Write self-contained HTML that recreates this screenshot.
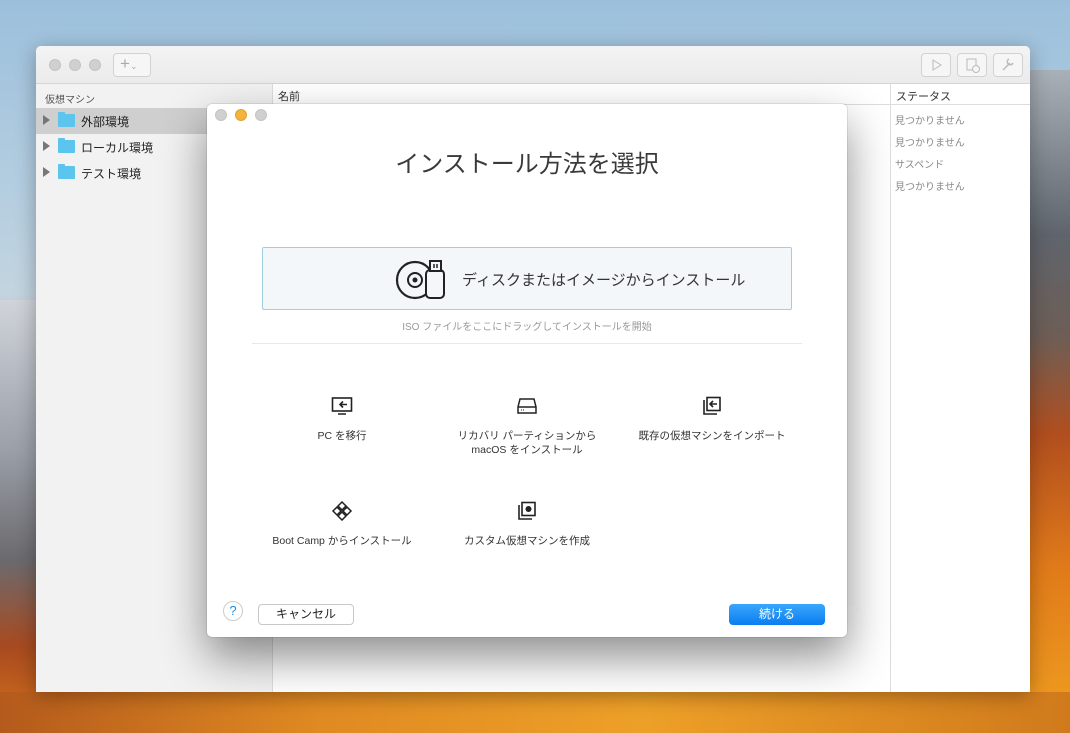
<!DOCTYPE html>
<html><head><meta charset="utf-8"><style>
*{margin:0;padding:0;box-sizing:border-box}
body{width:1070px;height:733px;overflow:hidden;position:relative;font-family:"Liberation Sans","Noto Sans CJK JP",sans-serif;
background:linear-gradient(180deg,#9cc0dc 0%,#b3cde0 25%,#c3d4df 40%,#8d8f95 60%,#b9542a 80%,#e0891c 92%,#c86a18 100%);}
.lm{position:absolute;left:0;top:300px;width:36px;height:433px;background:linear-gradient(180deg,#d0d4da 0%,#9a9fa8 35%,#6b6a6e 60%,#a84a20 80%,#d8741a 100%)}
.rm{position:absolute;right:0;top:70px;width:40px;height:663px;background:linear-gradient(180deg,#a8b0b8 0%,#5f646c 25%,#6d5e56 40%,#b14e1e 55%,#e07a1a 75%,#f0a020 100%)}
.bot{position:absolute;left:0;top:692px;width:1070px;height:41px;background:linear-gradient(90deg,#b45a1c,#e08a22 30%,#eda028 60%,#d07a1c)}
.win{position:absolute;left:36px;top:46px;width:994px;height:646px;background:#fff;border-radius:5px 5px 0 0;overflow:hidden;box-shadow:0 4px 20px rgba(0,0,0,.3)}
.tb{height:38px;background:linear-gradient(#f3f3f3,#ebebeb);border-bottom:1px solid #d5d5d5;position:relative}
.dot{position:absolute;width:12px;height:12px;border-radius:50%;background:#d0d0d0;border:1px solid #c4c4c4}
.btn{position:absolute;border:1px solid #d2d2d2;border-radius:4px;background:#f6f6f6;color:#aaa}
.side{position:absolute;left:0;top:38px;width:237px;bottom:0;background:#f2f2f2;border-right:1px solid #ddd}
.side .h{font-size:10px;color:#555;padding:7px 0 0 9px;height:24px}
.row{height:26px;position:relative;font-size:12px;color:#222}
.row .tri{position:absolute;left:7px;top:7px;width:0;height:0;border-left:7px solid #777;border-top:5px solid transparent;border-bottom:5px solid transparent}
.row .f{position:absolute;left:22px;top:6px;width:17px;height:13px;background:#5cc5ee;border-radius:1px}
.row .f:before{content:"";position:absolute;left:0;top:-2px;width:7px;height:3px;background:#5cc5ee;border-radius:1px 1px 0 0}
.row span{position:absolute;left:45px;top:5px}
.col{position:absolute;top:38px;height:21px;border-bottom:1px solid #ddd;font-size:11px;color:#333;padding:4px 5px}
.st{position:absolute;left:859px;font-size:10px;color:#888}
.dlg{position:absolute;left:207px;top:104px;width:640px;height:533px;background:#fff;border-radius:5px;box-shadow:0 20px 45px rgba(0,0,0,.45),0 0 0 1px rgba(0,0,0,.08)}
.ttl{position:absolute;top:40px;width:100%;text-align:center;font-size:24px;color:#3a3a3a}
.big{position:absolute;left:55px;top:143px;width:530px;height:63px;background:#f3f7fa;border:1px solid #9fd0e0;border-radius:2px}
.big span{position:absolute;left:199px;top:21px;font-size:15px;color:#333}
.hint{position:absolute;top:214px;width:100%;text-align:center;font-size:10px;color:#999}
.sep{position:absolute;left:45px;top:239px;width:550px;border-top:1px solid #e8e8e8}
.opt{position:absolute;width:200px;text-align:center;font-size:10.5px;color:#333;line-height:14px}
.opt svg{display:block;margin:0 auto 13px}
</style></head><body>
<div class="lm"></div><div class="rm"></div><div class="bot"></div>
<div class="win">
 <div class="tb">
  <div class="dot" style="left:13px;top:13px"></div><div class="dot" style="left:33px;top:13px"></div><div class="dot" style="left:53px;top:13px"></div>
  <div class="btn" style="left:77px;top:7px;width:38px;height:24px;font-size:17px;line-height:20px;padding-left:6px">+<span style="font-size:9px">⌄</span></div>
  <div class="btn" style="left:885px;top:7px;width:30px;height:24px"><svg width="28" height="22"><path d="M11 6l8 5-8 5z" fill="none" stroke="#bbb"/></svg></div>
  <div class="btn" style="left:921px;top:7px;width:30px;height:24px"><svg width="28" height="22"><rect x="9" y="5" width="9" height="11" fill="none" stroke="#bbb"/><circle cx="18" cy="15" r="3.5" fill="#f6f6f6" stroke="#bbb"/></svg></div>
  <div class="btn" style="left:957px;top:7px;width:30px;height:24px"><svg width="28" height="22"><path d="M9 16l7-7M15 5a3 3 0 1 0 4 4" fill="none" stroke="#bbb" stroke-width="1.5"/></svg></div>
 </div>
 <div class="side">
  <div class="h">仮想マシン</div>
  <div class="row" style="background:#cfcfcf"><i class="tri"></i><i class="f"></i><span>外部環境</span></div>
  <div class="row"><i class="tri"></i><i class="f"></i><span>ローカル環境</span></div>
  <div class="row"><i class="tri"></i><i class="f"></i><span>テスト環境</span></div>
 </div>
 <div class="col" style="left:237px;width:617px">名前</div>
 <div class="col" style="left:854px;width:140px;border-left:1px solid #ddd">ステータス</div>
 <div style="position:absolute;left:854px;top:59px;bottom:0;border-left:1px solid #ddd"></div>
 <div class="st" style="top:66px">見つかりません</div>
 <div class="st" style="top:88px">見つかりません</div>
 <div class="st" style="top:110px">サスペンド</div>
 <div class="st" style="top:132px">見つかりません</div>
</div>
<div class="dlg">
 <div class="dot" style="left:8px;top:5px"></div><div class="dot" style="left:28px;top:5px;background:#f5b33b;border-color:#e0a030"></div><div class="dot" style="left:48px;top:5px"></div>
 <div class="ttl">インストール方法を選択</div>
 <div class="big">
  <svg style="position:absolute;left:132px;top:10px" width="54" height="44" viewBox="0 0 54 44"><circle cx="20" cy="22" r="18" fill="none" stroke="#222" stroke-width="2.2"/><circle cx="20" cy="22" r="7" fill="none" stroke="#222" stroke-width="2"/><circle cx="20" cy="22" r="2.5" fill="#222"/><rect x="31" y="12" width="18" height="28" rx="4" fill="#f3f7fa" stroke="#222" stroke-width="2"/><rect x="35" y="3" width="11" height="10" fill="#f3f7fa" stroke="#222" stroke-width="2"/><path d="M39 6v4M42 6v4" stroke="#222" stroke-width="1.5"/></svg>
  <span>ディスクまたはイメージからインストール</span>
 </div>
 <div class="hint">ISO ファイルをここにドラッグしてインストールを開始</div>
 <div class="sep"></div>
 <div class="opt" style="left:35px;top:292px"><svg width="22" height="20"><rect x="1.5" y="2" width="19" height="13" fill="none" stroke="#222" stroke-width="1.6"/><path d="M7 18h8M16 8.5h-7M12 5.5l-3 3 3 3" fill="none" stroke="#222" stroke-width="1.6"/></svg>PC を移行</div>
 <div class="opt" style="left:220px;top:292px"><svg width="22" height="20"><path d="M4 3h14l2 8v6H2v-6z M2 11h18" fill="none" stroke="#222" stroke-width="1.5"/><path d="M5 14h1M7 14h1" stroke="#222"/></svg>リカバリ パーティションから<br>macOS をインストール</div>
 <div class="opt" style="left:405px;top:292px"><svg width="22" height="20"><path d="M3 4v14h13" fill="none" stroke="#222" stroke-width="1.6"/><rect x="6" y="1.5" width="13" height="13" fill="none" stroke="#222" stroke-width="1.6"/><path d="M16 8h-7M12 5l-3 3 3 3" fill="none" stroke="#222" stroke-width="1.6"/></svg>既存の仮想マシンをインポート</div>
 <div class="opt" style="left:35px;top:397px"><svg width="22" height="20"><g fill="none" stroke="#222" stroke-width="1.5"><path d="M11 1l4 4-4 4-4-4z"/><path d="M11 11l4 4-4 4-4-4z"/><path d="M6 6l4 4-4 4-4-4z"/><path d="M16 6l4 4-4 4-4-4z"/></g></svg>Boot Camp からインストール</div>
 <div class="opt" style="left:220px;top:397px"><svg width="22" height="20"><path d="M3 4v14h13" fill="none" stroke="#222" stroke-width="1.6"/><rect x="6" y="1.5" width="13" height="13" fill="none" stroke="#222" stroke-width="1.6"/><circle cx="12.5" cy="8" r="3" fill="#222"/></svg>カスタム仮想マシンを作成</div>
 <div style="position:absolute;left:16px;top:497px;width:20px;height:20px;border-radius:50%;border:1px solid #ccc;color:#1a8ee8;font-size:13px;text-align:center;line-height:18px">?</div>
 <div style="position:absolute;left:51px;top:500px;width:96px;height:21px;border:1px solid #c8c8c8;border-radius:4px;font-size:12px;text-align:center;line-height:19px;color:#222">キャンセル</div>
 <div style="position:absolute;left:522px;top:500px;width:96px;height:21px;border-radius:4px;background:linear-gradient(#3aa6fb,#0a7df0);font-size:12px;text-align:center;line-height:21px;color:#fff">続ける</div>
</div>
</body></html>
